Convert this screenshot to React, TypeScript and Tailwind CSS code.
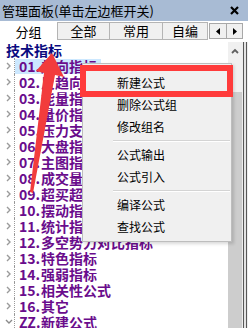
import React from "react";

const groups = [
  ["01.", "趋向指标"],
  ["02.", "反趋向指标"],
  ["03.", "能量指标"],
  ["04.", "量价指标"],
  ["05.", "压力支撑指标"],
  ["06.", "大盘指标"],
  ["07.", "主图指标"],
  ["08.", "成交量指标"],
  ["09.", "超买超卖指标"],
  ["10.", "摆动指标"],
  ["11.", "统计指标"],
  ["12.", "多空势力对比指标"],
  ["13.", "特色指标"],
  ["14.", "强弱指标"],
  ["15.", "相关性公式"],
  ["16.", "其它"],
  ["ZZ.", "新建公式"],
];

const menu: (string | null)[] = [
  "新建公式",
  "删除公式组",
  "修改组名",
  null,
  "公式输出",
  "公式引入",
  null,
  "编译公式",
  "查找公式",
];

const Chevron = ({ open }: { open?: boolean }) =>
  open ? (
    <svg width="8" height="6" viewBox="0 0 8 6" className="ml-[5px]">
      <polyline points="1,1 4,4 7,1" fill="none" stroke="#8a8a8a" strokeWidth="1.4" />
    </svg>
  ) : (
    <svg width="6" height="8" viewBox="0 0 6 8" className="ml-[6px]">
      <polyline points="1,1 4,4 1,7" fill="none" stroke="#9a9a9a" strokeWidth="1.4" />
    </svg>
  );

const App = () => {
  return (
    <div className="relative w-[248px] h-[328px] overflow-hidden bg-white flex flex-col font-['Noto_Sans_CJK_SC',sans-serif]">
      {/* Title bar */}
      <div className="h-[21px] shrink-0 bg-[#a8bbd4] flex items-center justify-between pl-[2px] pr-[9px]">
        <span className="text-[13px] leading-[21px] text-black">管理面板(单击左边框开关)</span>
        <svg width="9" height="9" viewBox="0 0 9 9">
          <path d="M1 1 L8 8 M8 1 L1 8" stroke="#000" strokeWidth="2.2" />
        </svg>
      </div>

      {/* Tabs */}
      <div className="h-[21px] shrink-0 flex items-end bg-white text-[13px] leading-[16px] text-black">
        <div className="w-[57px] h-full flex items-center justify-center bg-white">分组</div>
        <div className="w-[53px] h-[18px] mb-[2px] flex items-center justify-center bg-[#f0f0f0] border border-[#b4b4b4]">全部</div>
        <div className="w-[53px] h-[18px] mb-[2px] flex items-center justify-center bg-[#f0f0f0] border border-l-0 border-[#b4b4b4]">常用</div>
        <div className="w-[45px] h-[18px] mb-[2px] flex items-center justify-center bg-[#f0f0f0] border border-l-0 border-[#b4b4b4]">自编</div>
        <div className="h-[16px] mb-[3px] ml-[1px] flex">
          <div className="w-[18px] h-full flex items-center justify-center bg-[#f0f0f0] border border-[#a8a8a8]">
            <svg width="4" height="7" viewBox="0 0 4 7"><polygon points="4,0 0,3.5 4,7" fill="#000" /></svg>
          </div>
          <div className="w-[16px] h-full flex items-center justify-center bg-[#f0f0f0] border border-l-0 border-[#a8a8a8]">
            <svg width="4" height="7" viewBox="0 0 4 7"><polygon points="0,0 4,3.5 0,7" fill="#000" /></svg>
          </div>
        </div>
      </div>

      {/* Body */}
      <div className="flex-1 flex min-h-0">
        <div className="w-[228px] flex flex-col overflow-hidden">
          <div className="h-[16px] shrink-0 flex items-center pl-[6px] text-[14px] font-bold text-[#0a0a80] leading-[16px]">
            技术指标
          </div>
          {groups.map(([num, name], i) => (
            <div key={num} className="h-[16px] shrink-0 flex items-center">
              <div className="w-[15px] h-full flex items-center border-r border-dotted border-[#9a9a9a]">
                <Chevron open={i === groups.length - 1} />
              </div>
              <span
                className={
                  "h-[15px] flex items-center px-[4px] text-[14px] font-bold leading-[15px] text-[#6a0c8c] whitespace-nowrap " +
                  (i === 0 ? "bg-[#cce8ff]" : "")
                }
              >
                <span className="w-[22px]">{num}</span>
                {name}
              </span>
            </div>
          ))}
        </div>

        {/* Scrollbar */}
        <div className="w-[14px] flex flex-col">
          <div className="h-[18px] bg-[#f0f0f0] flex items-center justify-center">
            <svg width="8" height="6" viewBox="0 0 8 6">
              <polyline points="1,5 4,2 7,5" fill="none" stroke="#606060" strokeWidth="1.8" />
            </svg>
          </div>
          <div className="h-[32px] bg-[#f0f0f0]" />
          <div className="flex-1 bg-[#cdcdcd]" />
        </div>

        {/* Frame edge */}
        <div className="w-[6px] flex">
          <div className="w-px bg-[#eeeeee]" />
          <div className="w-px bg-[#585858]" />
          <div className="w-[2px] bg-[#e4e4e4]" />
          <div className="w-px bg-[#585858]" />
          <div className="w-px bg-[#eeeeee]" />
        </div>
      </div>

      {/* Context menu */}
      <div className="absolute left-[82px] top-[63px] w-[150px] bg-[#f0f0f0] border border-[#bdbdbd] pt-[8px] pb-[3px] shadow-[2px_2px_3px_rgba(0,0,0,0.15)]">
        {menu.map((m, i) =>
          m ? (
            <div key={i} className="h-[22px] flex items-center pl-[34px] text-[12px] text-black leading-[16px]">
              {m}
            </div>
          ) : (
            <div key={i} className="h-[6px] flex items-center ml-[30px] mr-[1px]">
              <div className="w-full h-[2px] border-t border-[#d4d4d4] border-b-white border-b" />
            </div>
          )
        )}
      </div>

      {/* Red highlight box */}
      <div className="absolute left-[80px] top-[65px] w-[153px] h-[32px] border-[6px] border-[#ff3b3b]" />

      {/* Red arrow */}
      <svg className="absolute left-0 top-0 pointer-events-none" width="248" height="328" viewBox="0 0 248 328">
        <polygon
          points="52,53 64,77 55,75 33,193 30,192 44,73 36,71"
          fill="#f23c3c"
        />
      </svg>
    </div>
  );
};

export default App;
